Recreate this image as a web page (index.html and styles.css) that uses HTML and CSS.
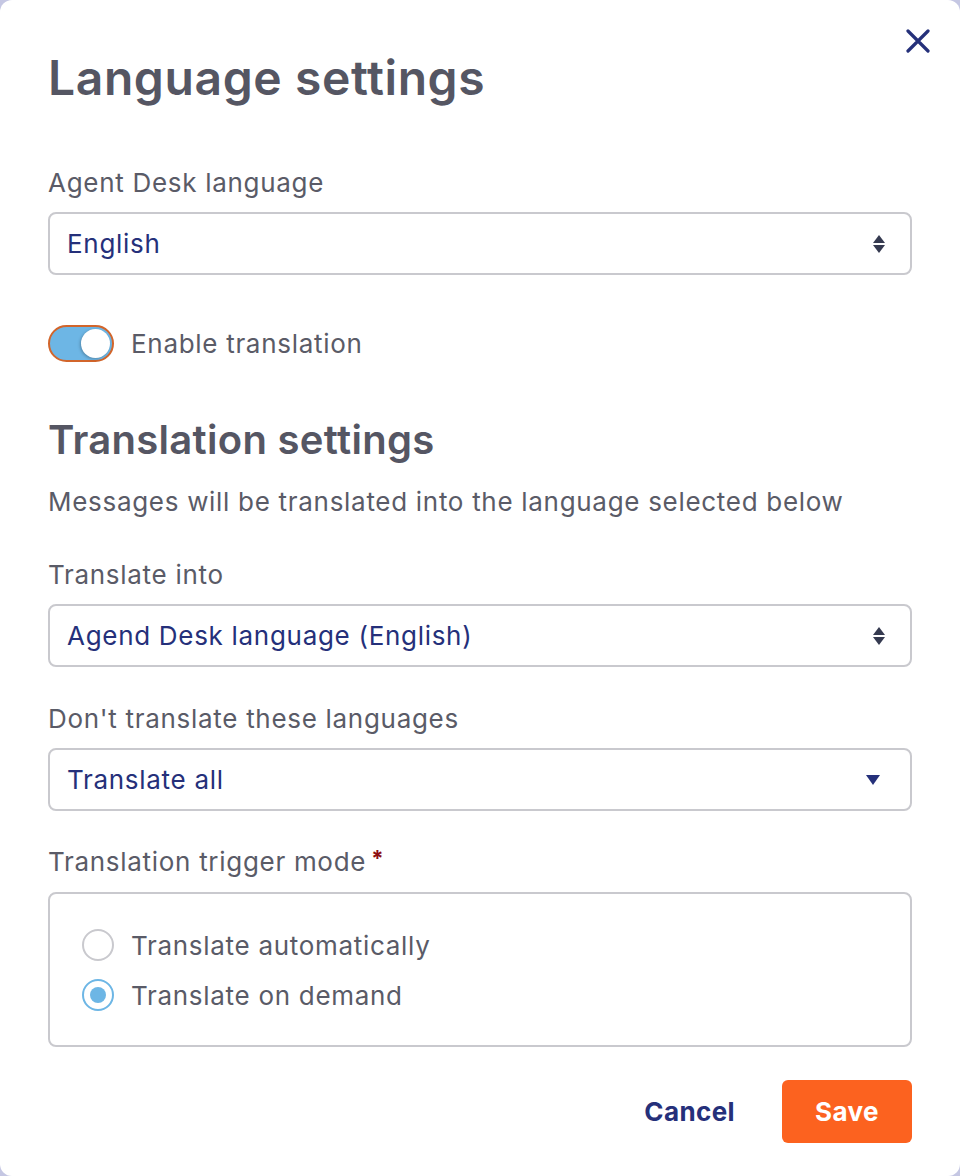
FILE: index.html
```html
<!DOCTYPE html>
<html lang="en">

<head>
    <meta charset="utf-8">
    <meta name="viewport" content="width=device-width, initial-scale=1.0">
    <title>Language settings</title>
    <link rel="stylesheet" href="styles.css">
</head>

<body>
    <div class="dialog">
        <div class="dialog-header">
            <h1 class="dialog-title">Language settings</h1>
            <button class="close-btn" type="button" aria-label="Close">
                <svg width="24" height="24" viewBox="0 0 24 24">
                    <path d="M2 2 L22 22 M22 2 L2 22" stroke="#25307a" stroke-width="3.2" stroke-linecap="round" fill="none"/>
                </svg>
            </button>
        </div>

        <label class="field-label first">Agent Desk language</label>
        <div class="select">
            <span class="select-value">English</span>
            <svg class="select-icon" width="14" height="20" viewBox="0 0 14 20">
                <path d="M7 1 L13 9 L1 9 Z M1 11 L13 11 L7 19 Z" fill="#353a50"/>
            </svg>
        </div>

        <div class="toggle-row">
            <span class="toggle"><span class="knob"></span></span>
            <span class="toggle-text">Enable translation</span>
        </div>

        <h2 class="section-title">Translation settings</h2>
        <p class="section-desc">Messages will be translated into the language selected below</p>

        <label class="field-label">Translate into</label>
        <div class="select">
            <span class="select-value">Agend Desk language (English)</span>
            <svg class="select-icon" width="14" height="20" viewBox="0 0 14 20">
                <path d="M7 1 L13 9 L1 9 Z M1 11 L13 11 L7 19 Z" fill="#353a50"/>
            </svg>
        </div>

        <label class="field-label">Don't translate these languages</label>
        <div class="select">
            <span class="select-value">Translate all</span>
            <svg class="select-icon caret" width="14" height="10" viewBox="0 0 14 10">
                <path d="M0 0 L14 0 L7 10 Z" fill="#25307a"/>
            </svg>
        </div>

        <label class="field-label trigger">Translation trigger mode<span class="required">*</span></label>
        <div class="radio-box">
            <div class="radio-row">
                <span class="radio"></span>
                <span class="radio-text">Translate automatically</span>
            </div>
            <div class="radio-row">
                <span class="radio checked"></span>
                <span class="radio-text">Translate on demand</span>
            </div>
        </div>

        <div class="actions">
            <button class="btn-cancel" type="button">Cancel</button>
            <button class="btn-save" type="button">Save</button>
        </div>
    </div>
</body>

</html>
```

FILE: styles.css
```css
:root {
    --text: #5a5b67;
    --title: #555663;
    --navy: #25307a;
    --border: #c9c9ce;
    --blue: #6db6e5;
    --orange: #fc621f;
    --font: "Inter", "Noto Sans", sans-serif;
}

*,
::before,
::after {
    box-sizing: border-box;
    margin: 0;
    padding: 0;
}

body {
    background: #c5c7e3;
    font-family: var(--font);
    color: var(--text);
    letter-spacing: 0.7px;
}

.dialog {
    width: 960px;
    height: 1176px;
    background: #fff;
    border-radius: 12px;
    padding: 0 48px;
}

.dialog-header {
    display: flex;
    justify-content: space-between;
    align-items: flex-start;
    padding-top: 28px;
}

.dialog-title {
    margin-top: 20px;
    font-size: 48px;
    line-height: 60px;
    font-weight: 600;
    color: var(--title);
    letter-spacing: 0.6px;
}

.close-btn {
    border: none;
    background: none;
    width: 24px;
    height: 24px;
    margin-top: 1px;
    margin-right: -18px;
    cursor: pointer;
}

.close-btn svg {
    display: block;
}

.field-label {
    display: block;
    margin-top: 36px;
    margin-bottom: 13px;
    font-size: 26px;
    line-height: 32px;
}

.field-label.first {
    margin-top: 59px;
}

.field-label.trigger {
    margin-top: 35px;
}

.required {
    color: #8c0d12;
    font-weight: 700;
    font-size: 22px;
    margin-left: 5px;
    position: relative;
    top: -5px;
}

.select {
    display: flex;
    align-items: center;
    justify-content: space-between;
    height: 63px;
    border: 2px solid var(--border);
    border-radius: 8px;
    padding: 0 24px 0 17px;
}

.select-value {
    font-size: 26px;
    color: var(--navy);
}

.select-icon {
    display: block;
}

.select-icon.caret {
    margin-right: 6px;
}

.toggle-row {
    display: flex;
    align-items: center;
    gap: 17px;
    margin-top: 50px;
    height: 37px;
}

.toggle {
    display: flex;
    align-items: center;
    justify-content: flex-end;
    width: 66px;
    height: 37px;
    border: 2px solid #d2652b;
    border-radius: 19px;
    background: var(--blue);
    padding: 0 2px;
}

.knob {
    width: 29px;
    height: 29px;
    border-radius: 50%;
    background: #fff;
    box-shadow: -1px 1px 3px rgba(0, 0, 0, 0.25);
}

.toggle-text {
    font-size: 26px;
}

.section-title {
    margin-top: 54px;
    font-size: 40px;
    line-height: 48px;
    font-weight: 600;
    color: var(--title);
    letter-spacing: 0.3px;
}

.section-desc {
    margin-top: 22px;
    font-size: 26px;
    line-height: 32px;
}

.section-desc + .field-label {
    margin-top: 41px;
}

.radio-box {
    border: 2px solid var(--border);
    border-radius: 8px;
    padding: 26px 32px 25px;
}

.radio-row {
    display: flex;
    align-items: center;
    gap: 17px;
    height: 50px;
}

.radio {
    width: 32px;
    height: 32px;
    border: 2px solid var(--border);
    border-radius: 50%;
    display: flex;
    align-items: center;
    justify-content: center;
}

.radio.checked {
    border-color: var(--blue);
}

.radio.checked::after {
    content: "";
    width: 16px;
    height: 16px;
    border-radius: 50%;
    background: var(--blue);
}

.radio-text {
    font-size: 26px;
}

.actions {
    display: flex;
    justify-content: flex-end;
    align-items: center;
    gap: 47px;
    margin-top: 33px;
}

.btn-cancel {
    border: none;
    background: none;
    font-family: var(--font);
    font-size: 26px;
    font-weight: 700;
    letter-spacing: 0.4px;
    color: var(--navy);
    cursor: pointer;
}

.btn-save {
    width: 130px;
    height: 63px;
    border: none;
    border-radius: 6px;
    background: var(--orange);
    font-family: var(--font);
    font-size: 26px;
    font-weight: 700;
    letter-spacing: 0.4px;
    color: #fff;
    cursor: pointer;
}
```
